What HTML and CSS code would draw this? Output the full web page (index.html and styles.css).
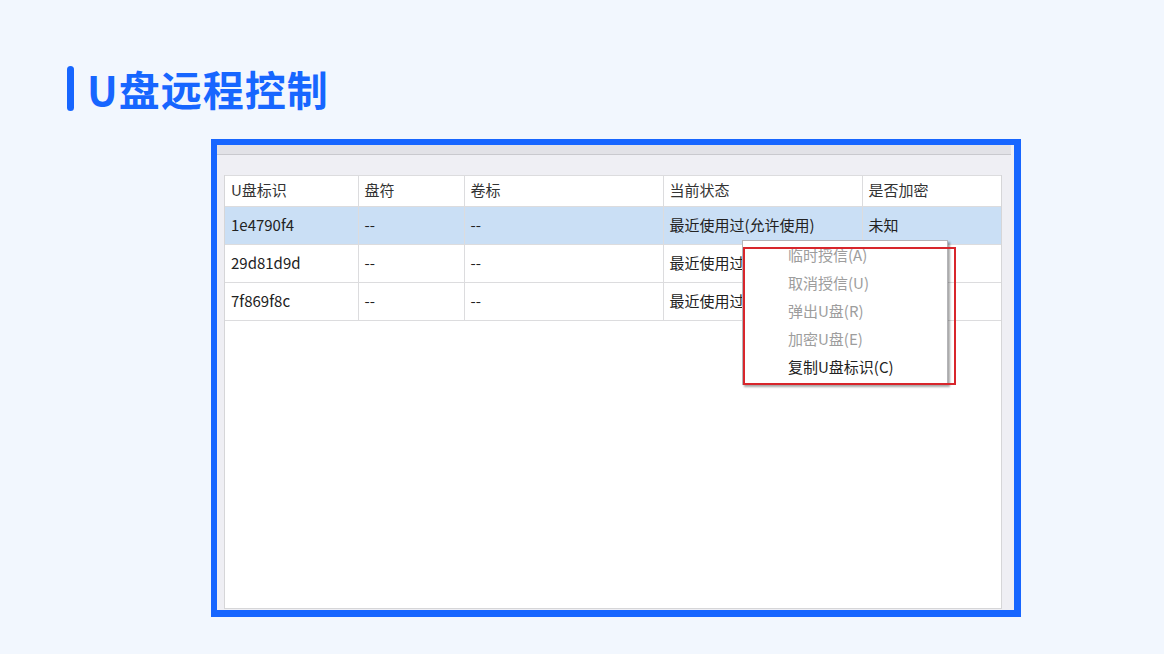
FILE: index.html
```html
<!DOCTYPE html>
<html lang="zh-CN">
<head>
<meta charset="UTF-8">
<meta name="viewport" content="width=device-width, initial-scale=1.0">
<title>U盘远程控制</title>
<link rel="stylesheet" href="styles.css">
</head>
<body>

<div class="page">
  <div class="heading">
    <span class="heading-bar"></span>
    <h1>U盘远程控制</h1>
  </div>

  <div class="shot">
    <div class="dialog">
      <div class="dialog-strip"></div>
      <div class="listbox">
        <table class="grid">
          <colgroup>
            <col style="width:133px">
            <col style="width:106px">
            <col style="width:199px">
            <col style="width:199px">
            <col>
          </colgroup>
          <thead>
            <tr>
              <th>U盘标识</th>
              <th>盘符</th>
              <th>卷标</th>
              <th>当前状态</th>
              <th>是否加密</th>
            </tr>
          </thead>
          <tbody>
            <tr class="selected">
              <td>1e4790f4</td>
              <td>--</td>
              <td>--</td>
              <td>最近使用过(允许使用)</td>
              <td>未知</td>
            </tr>
            <tr>
              <td>29d81d9d</td>
              <td>--</td>
              <td>--</td>
              <td>最近使用过(允许使用)</td>
              <td>未知</td>
            </tr>
            <tr>
              <td>7f869f8c</td>
              <td>--</td>
              <td>--</td>
              <td>最近使用过(允许使用)</td>
              <td>未知</td>
            </tr>
          </tbody>
        </table>
      </div>

      <!-- right-click menu over the list -->
      <div class="menu">
        <div class="menu-item disabled">临时授信(A)</div>
        <div class="menu-item disabled">取消授信(U)</div>
        <div class="menu-item disabled">弹出U盘(R)</div>
        <div class="menu-item disabled">加密U盘(E)</div>
        <div class="menu-item">复制U盘标识(C)</div>
      </div>
      <div class="mark"></div>
    </div>
  </div>
</div>

</body>
</html>
```

FILE: styles.css
```css
body {
  margin: 0;
  background: #f2f7fe;
  font-family: "Noto Sans CJK SC", "Noto Sans", sans-serif;
}
.page {
  width: 1164px;
  height: 654px;
  padding-top: 66px;
  box-sizing: border-box;
}
.heading {
  display: flex;
  align-items: center;
  margin-left: 67px;
  height: 45px;
}
.heading-bar {
  width: 7px;
  height: 45px;
  border-radius: 4px;
  background: #1766ff;
}
.heading h1 {
  margin: 0 0 0 13px;
  font-size: 41px;
  font-weight: 700;
  line-height: 45px;
  color: #1766ff;
  letter-spacing: 1px;
}
.shot {
  margin: 28px 0 0 211px;
  width: 810px;
  height: 478px;
  box-sizing: border-box;
  border: 6px solid #1766ff;
  border-right-width: 7px;
  border-bottom-width: 7px;
}
.dialog {
  position: relative;
  height: 100%;
  background: #efeff4;
  display: flex;
  flex-direction: column;
}
.dialog-strip {
  height: 9px;
  background: #e2e2e7;
  border-bottom: 1px solid #c9c9ce;
  margin-right: 3px;
}
.listbox {
  flex: 1;
  margin: 20px 12px 1px 7px;
  background: #fff;
  border: 1px solid #d6d6d8;
  border-top: none;
}
.grid {
  width: 100%;
  border-collapse: collapse;
  table-layout: fixed;
  font-size: 15px;
  color: #222;
}
.grid th,
.grid td {
  text-align: left;
  font-weight: 400;
  padding: 0 6px 3px;
  border: 1px solid #dcdcde;
  white-space: nowrap;
  overflow: hidden;
}
.grid th {
  height: 27px;
  color: #333;
}
.grid td {
  height: 34px;
}
.grid th:first-child,
.grid td:first-child {
  border-left: none;
}
.grid th:last-child,
.grid td:last-child {
  border-right: none;
}
.grid tr.selected td {
  background: #cadff5;
}
.menu {
  position: absolute;
  left: 525px;
  top: 95px;
  width: 206px;
  padding: 0 0 3px;
  background: #fff;
  border: 1px solid #b4b4b8;
  box-shadow: 2px 2px 2px rgba(0, 0, 0, 0.35);
  box-sizing: border-box;
  font-size: 15px;
}
.menu-item {
  height: 28px;
  line-height: 28px;
  padding-left: 45px;
  color: #222;
}
.menu-item.disabled {
  color: #9d9d9d;
}
.mark {
  position: absolute;
  left: 526px;
  top: 102px;
  width: 213px;
  height: 138px;
  box-sizing: border-box;
  border: 2px solid #d8262c;
}
```
